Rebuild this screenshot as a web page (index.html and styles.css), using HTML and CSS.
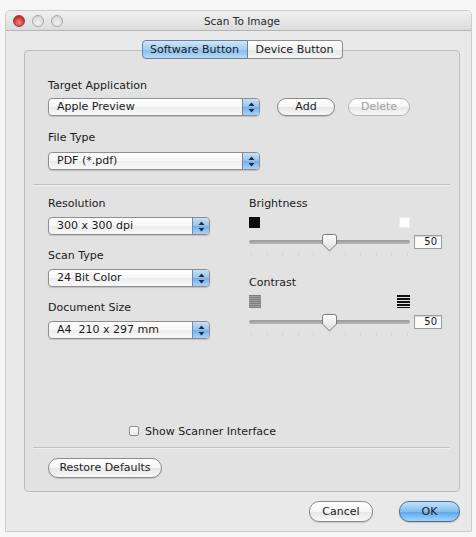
FILE: index.html
```html
<!DOCTYPE html>
<html>
<head>
<meta charset="utf-8">
<title>Scan To Image</title>
<link rel="stylesheet" href="styles.css">
</head>
<body>
<div class="window">
  <div class="titlebar">
    <div class="lights"><span class="light red"></span><span class="light"></span><span class="light"></span></div>
    <div class="title">Scan To Image</div>
    <div></div>
  </div>
  <div class="content">
    <div class="tabs">
      <span class="tab sel">Software Button</span><span class="tab">Device Button</span>
    </div>
    <div class="box">
      <div class="sec1">
        <div class="label">Target Application</div>
        <div class="row">
          <div class="popup wide"><span class="ptext">Apple Preview</span><span class="arrows"><svg width="7" height="11" viewBox="0 0 7 11"><path d="M3.5 0.5 L6.5 4 L0.5 4 Z" fill="#1d2c48"/><path d="M3.5 10.5 L6.5 7 L0.5 7 Z" fill="#1d2c48"/></svg></span></div>
          <button class="btn add">Add</button>
          <button class="btn del">Delete</button>
        </div>
        <div class="label l2">File Type</div>
        <div class="popup wide"><span class="ptext">PDF (*.pdf)</span><span class="arrows"><svg width="7" height="11" viewBox="0 0 7 11"><path d="M3.5 0.5 L6.5 4 L0.5 4 Z" fill="#1d2c48"/><path d="M3.5 10.5 L6.5 7 L0.5 7 Z" fill="#1d2c48"/></svg></span></div>
      </div>
      <div class="sep"></div>
      <div class="sec2">
        <div class="col left">
          <div class="label">Resolution</div>
          <div class="popup narrow"><span class="ptext">300 x 300 dpi</span><span class="arrows"><svg width="7" height="11" viewBox="0 0 7 11"><path d="M3.5 0.5 L6.5 4 L0.5 4 Z" fill="#1d2c48"/><path d="M3.5 10.5 L6.5 7 L0.5 7 Z" fill="#1d2c48"/></svg></span></div>
          <div class="label gap">Scan Type</div>
          <div class="popup narrow"><span class="ptext">24 Bit Color</span><span class="arrows"><svg width="7" height="11" viewBox="0 0 7 11"><path d="M3.5 0.5 L6.5 4 L0.5 4 Z" fill="#1d2c48"/><path d="M3.5 10.5 L6.5 7 L0.5 7 Z" fill="#1d2c48"/></svg></span></div>
          <div class="label gap">Document Size</div>
          <div class="popup narrow"><span class="ptext">A4&nbsp; 210 x 297 mm</span><span class="arrows"><svg width="7" height="11" viewBox="0 0 7 11"><path d="M3.5 0.5 L6.5 4 L0.5 4 Z" fill="#1d2c48"/><path d="M3.5 10.5 L6.5 7 L0.5 7 Z" fill="#1d2c48"/></svg></span></div>
        </div>
        <div class="col right">
          <div class="label">Brightness</div>
          <div class="icons b-icons"><span class="sq black"></span><span class="sq white"></span></div>
          <div class="slider-row">
            <div class="track"><span class="thumb"><svg width="15" height="18" viewBox="0 0 15 18"><defs><linearGradient id="tg" x1="0" y1="0" x2="0" y2="1"><stop offset="0" stop-color="#ffffff"/><stop offset="1" stop-color="#dcdcdc"/></linearGradient></defs><path d="M2.5 0.5 H12.5 Q14.5 0.5 14.5 2.5 V10 L7.5 17 L0.5 10 V2.5 Q0.5 0.5 2.5 0.5 Z" fill="url(#tg)" stroke="#7a7a7a"/></svg></span></div>
            <div class="value">50</div>
          </div>
          <div class="ticks"><i></i><i></i><i></i><i></i><i></i><i></i><i></i><i></i><i></i><i></i><i></i></div>
          <div class="label cgap">Contrast</div>
          <div class="icons c-icons"><span class="sq lowc"></span><span class="sq highc"></span></div>
          <div class="slider-row">
            <div class="track"><span class="thumb"><svg width="15" height="18" viewBox="0 0 15 18"><path d="M2.5 0.5 H12.5 Q14.5 0.5 14.5 2.5 V10 L7.5 17 L0.5 10 V2.5 Q0.5 0.5 2.5 0.5 Z" fill="url(#tg)" stroke="#7a7a7a"/></svg></span></div>
            <div class="value">50</div>
          </div>
          <div class="ticks"><i></i><i></i><i></i><i></i><i></i><i></i><i></i><i></i><i></i><i></i><i></i></div>
        </div>
      </div>
      <div class="spacer"></div>
      <label class="check"><span class="cb"></span>Show Scanner Interface</label>
      <div class="sep sep2"></div>
      <div class="restore-row"><button class="btn restore">Restore Defaults</button></div>
    </div>
    <div class="footer">
      <button class="btn cancel">Cancel</button>
      <button class="btn ok">OK</button>
    </div>
  </div>
</div>
</body>
</html>
```

FILE: styles.css
```css
* { box-sizing: border-box; }
body {
  margin: 0;
  background: #f6f6f6;
  font-family: "DejaVu Sans", sans-serif;
  font-size: 11px;
  color: #1a1a1a;
}
.window {
  margin: 10px 0 0 5px;
  width: 467px;
  height: 522px;
  background: #e9e9e9;
  border: 1px solid #cdcdcd;
  border-radius: 5px 5px 0 0;
  display: flex;
  flex-direction: column;
}
.titlebar {
  height: 20px;
  background: linear-gradient(#f0f0f0, #dcdcdc);
  border-bottom: 1px solid #b4b4b4;
  border-radius: 4px 4px 0 0;
  display: grid;
  grid-template-columns: 1fr auto 1fr;
  align-items: center;
  padding-left: 7px;
}
.lights { display: flex; gap: 7px; }
.light {
  width: 12px;
  height: 12px;
  border-radius: 50%;
  border: 1px solid #a9a9a9;
  background: radial-gradient(circle at 50% 70%, #f4f4f4, #cfcfcf);
}
.light.red {
  border-color: #9b3a3a;
  background: radial-gradient(circle at 50% 65%, #f28a8a, #c72b2b 70%, #a61d1d);
}
.title { font-size: 10.5px; color: #2a2a2a; }
.content {
  flex: 1;
  padding: 9px 11px 0 18px;
  display: flex;
  flex-direction: column;
}
.tabs {
  display: flex;
  justify-content: center;
  position: relative;
  z-index: 1;
  height: 19px;
}
.tab {
  height: 19px;
  line-height: 17px;
  border: 1px solid #8c8c8c;
  background: linear-gradient(#ffffff, #f3f3f3 50%, #e6e6e6 51%, #f5f5f5);
  padding: 0;
  white-space: nowrap;
  text-align: center;
  color: #1b1b1b;
}
.tab.sel {
  width: 106px;
  border-radius: 4px 0 0 4px;
  border-color: #6f7f93;
  background: linear-gradient(#cfe6f9, #a3cdf1 50%, #84bcec 51%, #b5dbf8);
}
.tab:last-child {
  width: 95px;
  border-left: none;
  border-radius: 0 4px 4px 0;
}
.box {
  margin-top: -9px;
  height: 442px;
  border: 1px solid #bdbdbd;
  border-radius: 4px;
  background: #e2e2e2;
  display: flex;
  flex-direction: column;
  padding: 28px 0 13px 0;
}
.label { height: 14px; line-height: 14px; margin-bottom: 6px; white-space: nowrap; }
.sec1 { padding-left: 23px; }
.sec1 .label { margin-bottom: 5px; }
.sec1 .l2 { margin-top: 15px; margin-bottom: 7px; }
.row { display: flex; align-items: center; }
.popup {
  height: 18px;
  border: 1px solid #8e8e8e;
  border-radius: 4px;
  background: linear-gradient(#ffffff, #f7f7f7 50%, #ececec 51%, #f9f9f9);
  box-shadow: 0 1px 1px rgba(0,0,0,0.15);
  display: flex;
  align-items: center;
  overflow: hidden;
}
.popup.wide { width: 212px; }
.popup.narrow { width: 162px; }
.ptext { flex: 1; padding-left: 8px; line-height: 16px; white-space: nowrap; }
.arrows {
  width: 17px;
  height: 100%;
  border-left: 1px solid #6f8aa8;
  background: linear-gradient(#c7e0f7, #94c2ec 50%, #74adea 51%, #a9d3f7);
  display: flex;
  align-items: center;
  justify-content: center;
}
.btn {
  font-family: "DejaVu Sans", sans-serif;
  font-size: 11px;
  color: #1b1b1b;
  height: 18px;
  padding: 0;
  border: 1px solid #8a8a8a;
  border-radius: 10px;
  background: linear-gradient(#ffffff, #f6f6f6 50%, #e6e6e6 51%, #f8f8f8);
  box-shadow: 0 1px 1px rgba(0,0,0,0.15);
  line-height: 16px;
}
.add { width: 58px; margin-left: 17px; }
.del { width: 62px; margin-left: 13px; color: #a0a0a0; border-color: #b5b5b5; box-shadow: none; }
.sep {
  height: 2px;
  margin: 14px 9px 0 8px;
  border-top: 1px solid #c2c2c2;
  border-bottom: 1px solid #efefef;
}
.sec2 {
  display: flex;
  padding: 11px 0 0 23px;
  gap: 39px;
}
.col.left { width: 162px; }
.col.right { width: 193px; }
.label.gap { margin-top: 14px; }
.label.cgap { margin-top: 18px; }
.icons {
  width: 161px;
  display: flex;
  justify-content: space-between;
}
.b-icons { margin-top: 1px; height: 11px; }
.c-icons { margin-top: -1px; height: 13px; }
.sq { display: block; width: 11px; height: 11px; }
.black { background: #0b0b0b; }
.white { background: #ffffff; border: 1px solid #ececec; }
.lowc {
  width: 12px;
  height: 13px;
  background: repeating-linear-gradient(#7c7c7c 0 1px, #a0a0a0 1px 2px);
}
.highc {
  width: 13px;
  height: 13px;
  background: repeating-linear-gradient(#111 0 2px, #e3e3e3 2px 3px);
}
.slider-row {
  margin-top: 7px;
  height: 14px;
  display: flex;
  align-items: center;
  gap: 4px;
}
.track {
  position: relative;
  width: 161px;
  height: 4px;
  border-radius: 2px;
  background: linear-gradient(#9a9a9a, #b8b8b8);
}
.thumb {
  position: absolute;
  left: 73px;
  top: -6px;
  width: 15px;
  height: 18px;
}
.thumb svg { display: block; }
.value {
  width: 28px;
  height: 14px;
  border: 1px solid #9b9b9b;
  background: #fbfbfb;
  box-shadow: inset 0 1px 1px rgba(0,0,0,0.15);
  font-size: 10px;
  line-height: 12px;
  text-align: right;
  padding-right: 4px;
}
.ticks {
  width: 161px;
  height: 6px;
  margin-top: 3px;
  display: flex;
  justify-content: space-between;
  padding: 0 2px;
}
.ticks i { display: block; width: 1px; height: 5px; background: #d6d6d6; }
.spacer { flex: 1; }
.check {
  display: flex;
  align-items: center;
  gap: 6px;
  height: 14px;
  padding-left: 104px;
}
.cb {
  width: 10px;
  height: 10px;
  border: 1px solid #8d8d8d;
  border-radius: 2px;
  background: linear-gradient(#ffffff, #e9e9e9);
}
.sep2 { margin-top: 9px; }
.restore-row { padding-left: 23px; margin-top: 9px; }
.restore { width: 114px; height: 20px; line-height: 18px; }
.footer {
  display: flex;
  justify-content: flex-end;
  gap: 26px;
  margin-top: 9px;
}
.cancel { width: 64px; height: 21px; line-height: 19px; }
.ok {
  width: 61px;
  height: 21px;
  line-height: 19px;
  border-color: #4f6e93;
  background: linear-gradient(#c3e2fa, #82bdf0 50%, #5aa5ea 51%, #a2d3fa);
}
```
